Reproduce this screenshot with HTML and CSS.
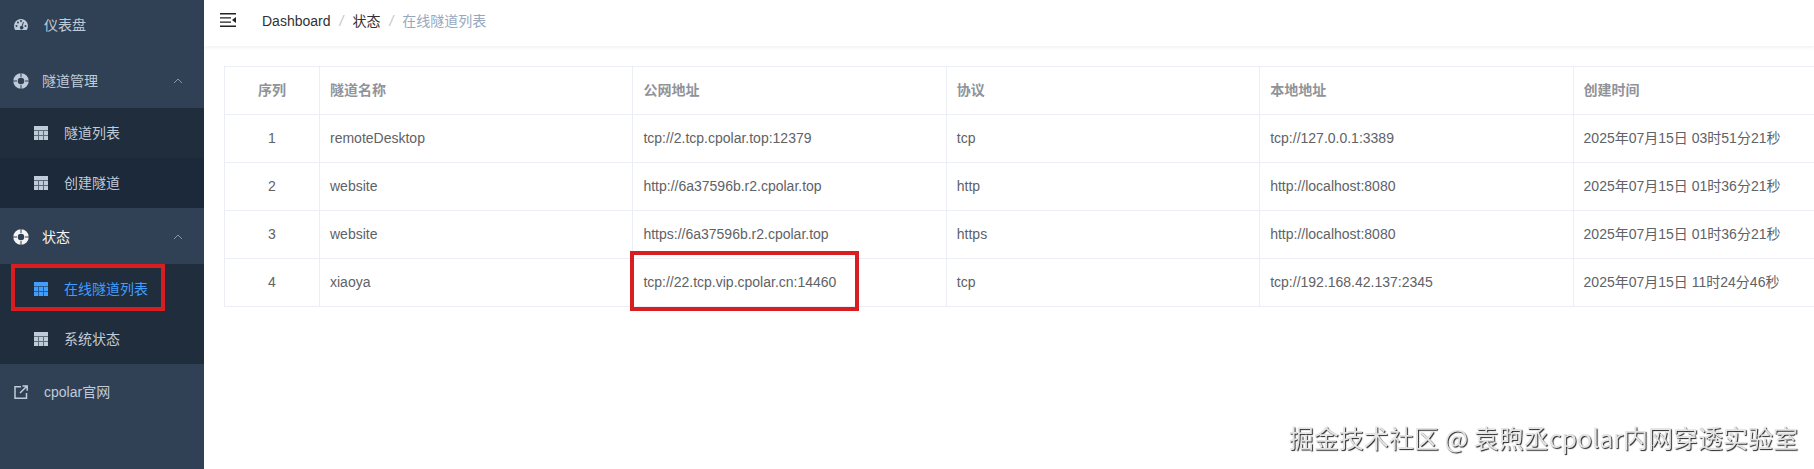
FILE: index.html
```html
<!DOCTYPE html>
<html lang="zh-CN">
<head>
<meta charset="UTF-8">
<meta name="viewport" content="width=device-width, initial-scale=1.0">
<title>在线隧道列表</title>
<link rel="stylesheet" href="styles.css">
</head>
<body>
<svg class="sprite" aria-hidden="true">
  <symbol id="i-dashboard" viewBox="0 0 14 14">
    <path fill-rule="evenodd" d="M7 1a7 7 0 0 0-6.1 10.4c.2.4.5.6 1 .6h10.2c.5 0 .8-.2 1-.6A7 7 0 0 0 7 1zM2.500 7a1 1 0 1 1 0 2 1 1 0 0 1 0-2zM4 3.500a1 1 0 1 1 0 2 1 1 0 0 1 0-2zM7 2a1 1 0 1 1 0 2 1 1 0 0 1 0-2zM11.500 7a1 1 0 1 1 0 2 1 1 0 0 1 0-2zM9 4l.9.3-1.300 3.900a1.700 1.700 0 1 1-1-.3z"/>
  </symbol>
  <symbol id="i-help" viewBox="0 0 16 16">
    <circle cx="8" cy="8" r="5.500" fill="none" stroke="currentColor" stroke-width="4.500"/>
    <path class="cut" d="M8 0v4M8 12v4M0 8h4M12 8h4"/>
  </symbol>
  <symbol id="i-grid" viewBox="0 0 14 14">
    <path d="M0 0h14v4H0zM0 5h4v4H0zM5 5h4v4H5zM10 5h4v4h-4zM0 10h4v4H0zM5 10h4v4H5zM10 10h4v4h-4z"/>
    <path opacity=".4" d="M0 4h14v10H0z"/>
  </symbol>
  <symbol id="i-link" viewBox="0 0 14 14">
    <path fill="none" stroke="currentColor" stroke-width="1.500" d="M7 1.700H1v11.500h11.500V8M6 8l6.500-6.500M8.500 1h4.700v4.700"/>
  </symbol>
  <symbol id="i-arrow" viewBox="0 0 12 12">
    <path fill="none" stroke="currentColor" d="M2 8l4-4 4 4"/>
  </symbol>
  <symbol id="i-fold" viewBox="0 0 16 14">
    <path d="M0 0h16v1.400H0zM0 4.200h11v1.400H0zM0 8.400h11v1.400H0zM0 12.600h16V14H0zM16 4v6l-4-3z"/>
  </symbol>
</svg>

<div class="app">
  <nav class="sidebar">
    <a class="menu-item first" href="#"><svg class="icon"><use href="#i-dashboard"/></svg>仪表盘</a>
    <button class="menu-title" type="button" aria-expanded="true">
      <svg class="icon-help"><use href="#i-help"/></svg>隧道管理
      <svg class="arrow"><use href="#i-arrow"/></svg>
    </button>
    <div class="submenu">
      <a class="menu-item" href="#"><svg class="icon"><use href="#i-grid"/></svg>隧道列表</a>
      <a class="menu-item hover" href="#"><svg class="icon"><use href="#i-grid"/></svg>创建隧道</a>
    </div>
    <button class="menu-title active" type="button" aria-expanded="true">
      <svg class="icon-help"><use href="#i-help"/></svg>状态
      <svg class="arrow"><use href="#i-arrow"/></svg>
    </button>
    <div class="submenu">
      <a class="menu-item active" href="#"><svg class="icon"><use href="#i-grid"/></svg>在线隧道列表<span class="mark"></span></a>
      <a class="menu-item" href="#"><svg class="icon"><use href="#i-grid"/></svg>系统状态</a>
    </div>
    <a class="menu-item" href="#"><svg class="icon"><use href="#i-link"/></svg>cpolar官网</a>
  </nav>

  <div class="main">
    <header class="navbar">
      <button class="fold" type="button" aria-label="收起菜单"><svg><use href="#i-fold"/></svg></button>
      <div class="breadcrumb">
        <a href="#">Dashboard</a><i>/</i><a href="#">状态</a><i>/</i><span>在线隧道列表</span>
      </div>
    </header>
    <div class="content">
      <table class="table">
        <thead>
          <tr><th class="index">序列</th><th>隧道名称</th><th>公网地址</th><th>协议</th><th>本地地址</th><th>创建时间</th></tr>
        </thead>
        <tbody>
          <tr><td class="index">1</td><td>remoteDesktop</td><td>tcp://2.tcp.cpolar.top:12379</td><td>tcp</td><td>tcp://127.0.0.1:3389</td><td>2025年07月15日 03时51分21秒</td></tr>
          <tr><td class="index">2</td><td>website</td><td>http://6a37596b.r2.cpolar.top</td><td>http</td><td>http://localhost:8080</td><td>2025年07月15日 01时36分21秒</td></tr>
          <tr><td class="index">3</td><td>website</td><td>https://6a37596b.r2.cpolar.top</td><td>https</td><td>http://localhost:8080</td><td>2025年07月15日 01时36分21秒</td></tr>
          <tr><td class="index">4</td><td>xiaoya</td><td class="marked">tcp://22.tcp.vip.cpolar.cn:14460<span class="mark"></span></td><td>tcp</td><td>tcp://192.168.42.137:2345</td><td>2025年07月15日 11时24分46秒</td></tr>
        </tbody>
      </table>
    </div>
  </div>
</div>
<div class="watermark">掘金技术社区 @ 袁煦丞cpolar内网穿透实验室</div>
</body>
</html>
```

FILE: styles.css
```css
*{
  margin: 0;
  padding: 0;
  box-sizing: border-box;
}
body{
  font: 14px/24px "Liberation Sans", "Noto Sans CJK SC", sans-serif;
  color: #606266;
  background-color: #fff;
  overflow: hidden;
}
a{
  color: inherit;
  text-decoration: none;
}
button{
  border: 0;
  background: none;
  font: inherit;
  color: inherit;
  cursor: pointer;
}
svg{
  fill: currentColor;
}
.sprite{
  display: none;
}
.app{
  display: flex;
  min-height: 100vh;
}

/* sidebar */
.sidebar{
  flex: 0 0 204px;
  background-color: #304156;
  color: #bfcbd9;
}
.menu-item,
.menu-title{
  position: relative;
  display: flex;
  align-items: center;
  width: 100%;
  height: 56px;
  padding: 0 18px 0 14px;
}
.menu-item.first{
  height: 52px;
  padding-bottom: 2px;
}
.menu-title{
  padding-top: 2px;
  padding-left: 13px;
}
.menu-title.active{
  color: #f4f4f5;
}
.icon{
  width: 14px;
  height: 14px;
  margin-right: 16px;
}
.icon-help{
  width: 16px;
  height: 16px;
  margin-right: 13px;
}
.cut{
  stroke: #304156;
  stroke-width: 1;
}
.arrow{
  width: 12px;
  height: 12px;
  margin-left: auto;
  margin-right: 2px;
  color: #909399;
}
.submenu{
  background-color: #1f2d3d;
}
.submenu .menu-item{
  height: 50px;
  padding-left: 34px;
}
.submenu .hover{
  background-color: #1b293b;
}
.submenu .active{
  color: #409eff;
}

/* red frames */
.mark{
  position: absolute;
  border: 4px solid #d81e20;
  pointer-events: none;
}
.sidebar .mark{
  top: 0;
  left: 11px;
  width: 154px;
  height: 47px;
}
.table .mark{
  top: -8px;
  left: -3px;
  width: 229px;
  height: 60px;
}

/* content */
.main{
  flex: 1;
  min-width: 0;
}
.navbar{
  display: flex;
  align-items: center;
  height: 46px;
  padding: 0 16px 4px;
  box-shadow: 0 1px 4px rgba(0, 21, 41, .08);
}
.fold{
  display: flex;
  padding-bottom: 2px;
  color: #222;
}
.fold svg{
  width: 16px;
  height: 14px;
}
.breadcrumb{
  display: flex;
  margin-left: 26px;
  color: #303133;
}
.breadcrumb i{
  margin: 0 9px;
  color: #c0c4cc;
}
.breadcrumb span{
  color: #97a8be;
}
.content{
  padding: 20px 0 20px 20px;
  overflow: hidden;
}
.table{
  width: calc(100% + 73px);
  table-layout: fixed;
  border-spacing: 0;
  border: solid #ebeef5;
  border-width: 1px 0 0 1px;
}
.table th,
.table td{
  height: 48px;
  padding: 0 10px 2px;
  border: solid #ebeef5;
  border-width: 0 1px 1px 0;
  text-align: left;
}
.table th{
  color: #909399;
}
.table .index{
  width: 95px;
  text-align: center;
}
.marked{
  position: relative;
}

.watermark{
  position: fixed;
  right: 16px;
  bottom: 14px;
  font: 25px/36px "Noto Sans CJK SC", sans-serif;
  color: #e4e4e4;
  text-shadow: 1px 1px 1px #222;
}
```
